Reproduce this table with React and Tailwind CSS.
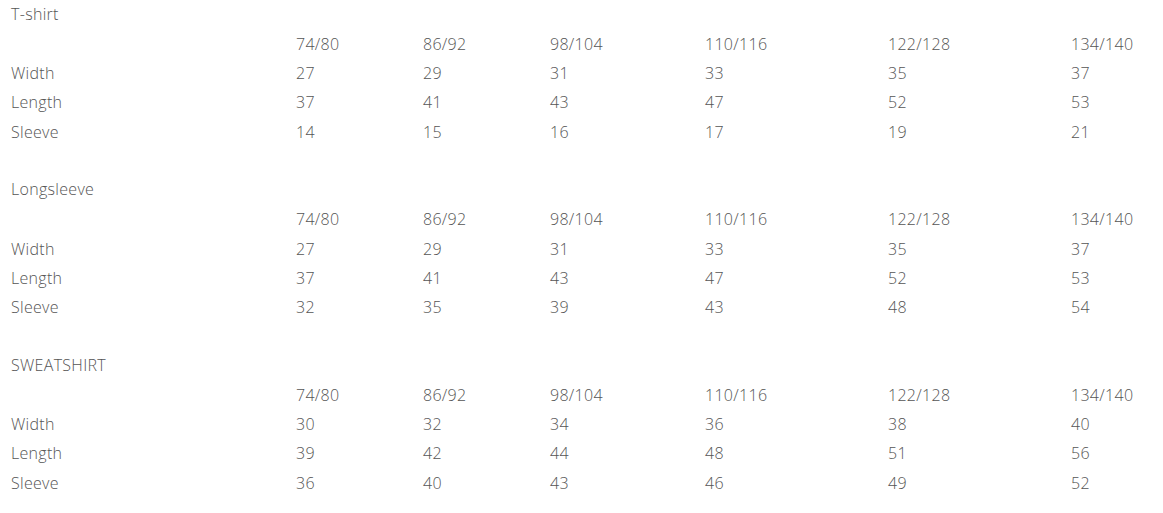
import React from "react";

const sizes = ["74/80", "86/92", "98/104", "110/116", "122/128", "134/140"];

const tables = [
  {
    title: "T-shirt",
    rows: [
      ["Width", 27, 29, 31, 33, 35, 37],
      ["Length", 37, 41, 43, 47, 52, 53],
      ["Sleeve", 14, 15, 16, 17, 19, 21],
    ],
  },
  {
    title: "Longsleeve",
    rows: [
      ["Width", 27, 29, 31, 33, 35, 37],
      ["Length", 37, 41, 43, 47, 52, 53],
      ["Sleeve", 32, 35, 39, 43, 48, 54],
    ],
  },
  {
    title: "SWEATSHIRT",
    rows: [
      ["Width", 30, 32, 34, 36, 38, 40],
      ["Length", 39, 42, 44, 48, 51, 56],
      ["Sleeve", 36, 40, 43, 46, 49, 52],
    ],
  },
];

const cols = "grid grid-cols-[285px_127px_127px_155px_183px_183px_1fr] h-[29.25px] items-center";

export default function SizeChart() {
  return (
    <main className="min-h-screen bg-white pl-[11px] text-[16px] font-light tracking-[0.3px] text-[#555] font-['Open_Sans',sans-serif]">
      {tables.map((t) => (
        <section key={t.title} className="pb-[29.25px]">
          <div className="h-[29.25px] flex items-center -translate-y-px">{t.title}</div>
          <div className={cols}>
            <span />
            {sizes.map((s) => (
              <span key={s}>{s}</span>
            ))}
          </div>
          {t.rows.map((r) => (
            <div key={r[0]} className={cols}>
              {r.map((v, i) => (
                <span key={i}>{v}</span>
              ))}
            </div>
          ))}
        </section>
      ))}
    </main>
  );
}
